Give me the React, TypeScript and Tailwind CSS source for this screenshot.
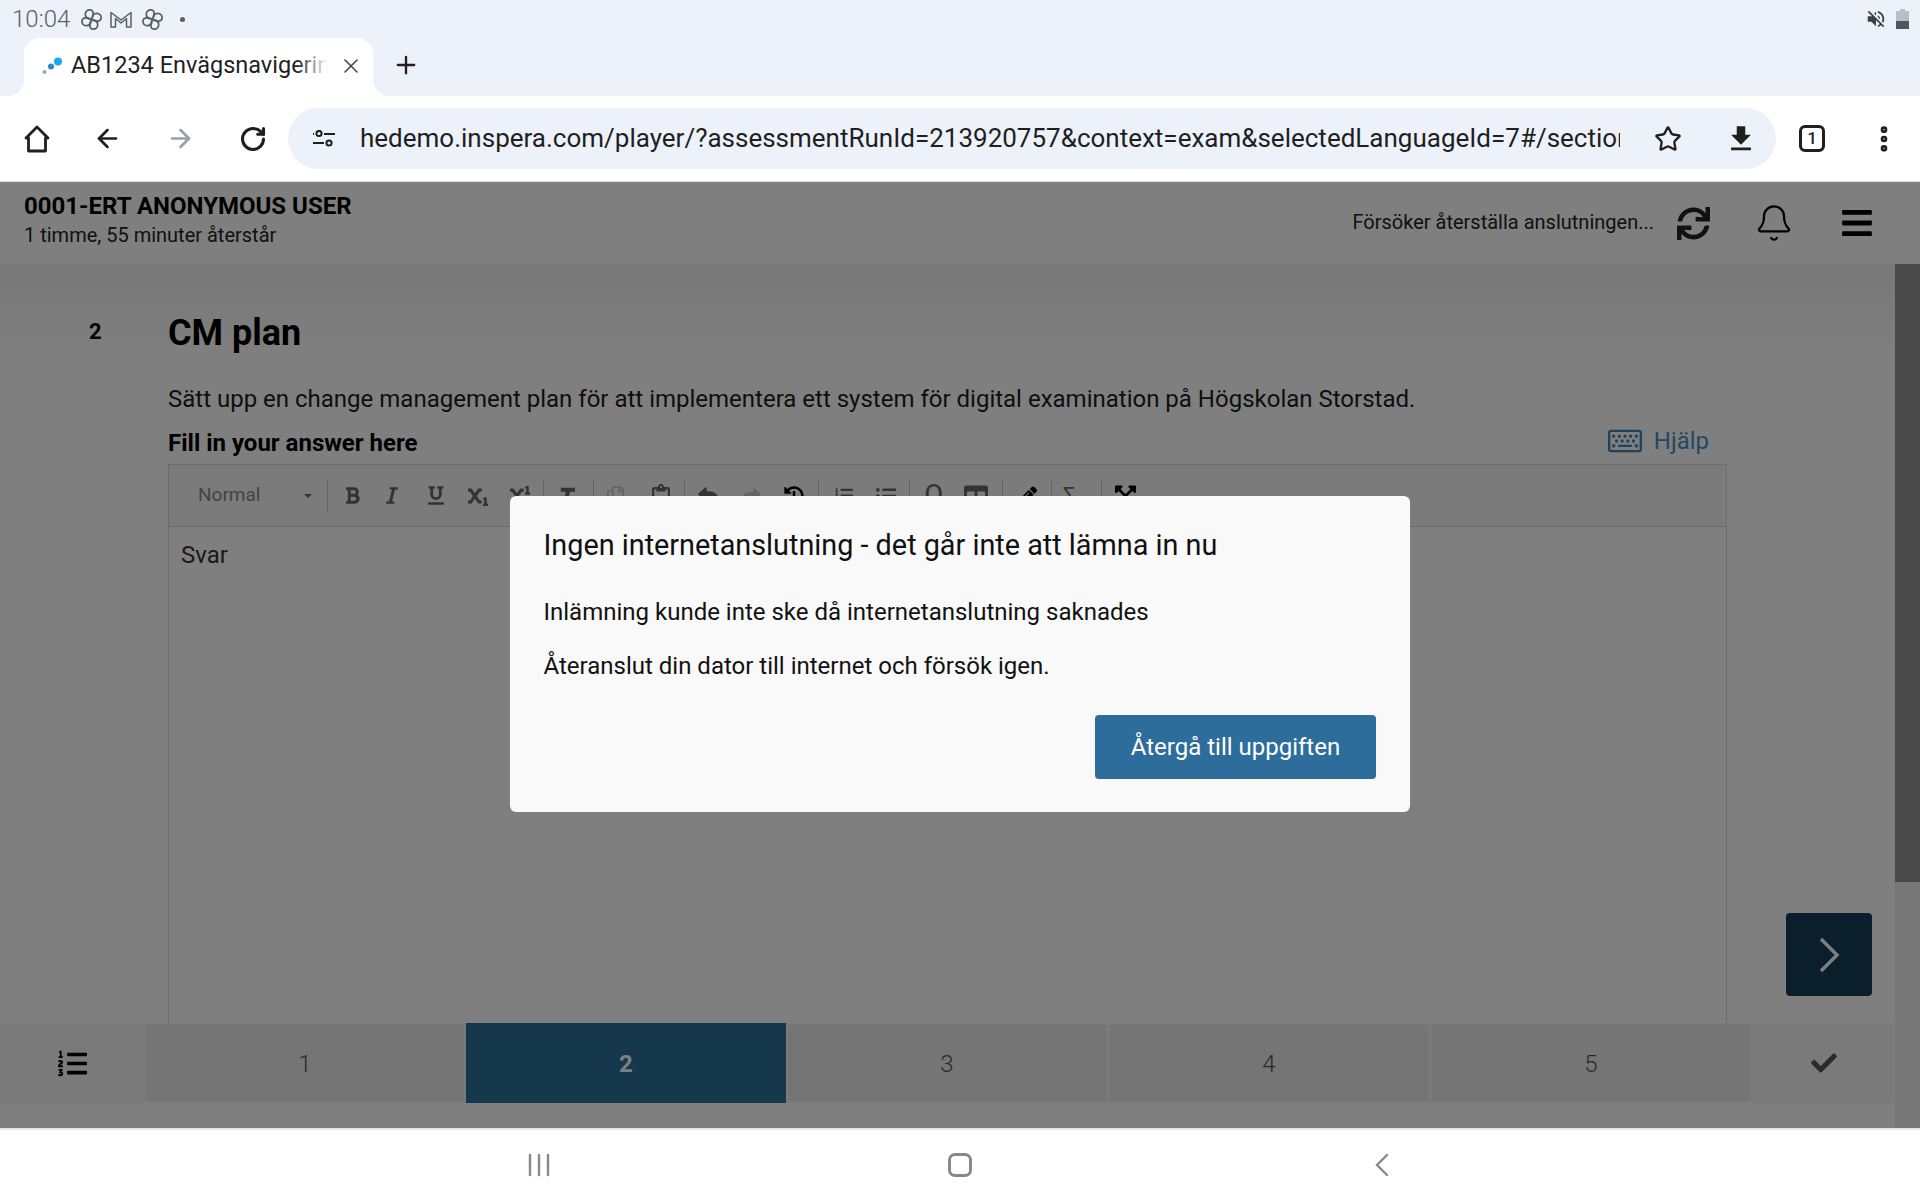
import React from 'react';
import { ArrowLeft, ArrowRight, Bell, EllipsisVertical, Plus, RotateCw, Star, X } from 'lucide-react';
import {
  FaBars, FaBold, FaCheck, FaExpandArrowsAlt, FaHistory, FaItalic, FaListOl, FaListUl, FaPencilAlt, FaRegClipboard, FaRegCopy,
  FaRegKeyboard, FaReply, FaShare, FaSubscript, FaSuperscript, FaSync, FaTable, FaUnderline,
} from 'react-icons/fa';
import { MdFileDownload, MdVolumeOff } from 'react-icons/md';

const Fan: React.FC = () => (
  <svg viewBox="0 0 24 24" className="w-[23px] h-[23px]" fill="none" stroke="#5a5f66" strokeWidth="1.8">
    {[0, 90, 180, 270].map((r) => (
      <path key={r} transform={`rotate(${r} 12 12)`} d="M12 11.5C8 11.5 5.5 9.5 5.5 6.5C5.5 3.5 8 1.8 10.5 2C13 2.2 14 4.2 13.6 6.5L12.6 11" />
    ))}
  </svg>
);

const Sep: React.FC<{ className: string }> = ({ className }) => (
  <div className={`w-px h-[31px] bg-[#c4c4c4] shrink-0 ${className}`} />
);

const EditorToolbar: React.FC = () => (
  <div className="h-[62px] bg-[#f6f6f6] border-b border-[#d0d0d0] flex items-center pl-[29px] text-[#666]">
    <span className="w-[58px] text-[19px] text-[#888] shrink-0">Normal</span>
    <span className="ml-[48px] w-0 h-0 border-x-[4px] border-x-transparent border-t-[4px] border-t-[#666] shrink-0" />
    <Sep className="ml-[15px]" />
    <div className="ml-[17px] w-[15px] flex justify-center shrink-0"><FaBold size={19} /></div>
    <div className="ml-[26px] w-[12px] flex justify-center shrink-0"><FaItalic size={19} /></div>
    <div className="ml-[30px] w-[16px] flex justify-center shrink-0"><FaUnderline size={19} /></div>
    <div className="ml-[24px] w-[20px] flex justify-center shrink-0"><FaSubscript size={20} /></div>
    <div className="ml-[22px] w-[20px] flex justify-center shrink-0"><FaSuperscript size={20} /></div>
    <Sep className="ml-[13px]" />
    <div className="ml-[16px] w-[15px] flex justify-center shrink-0">
      <svg viewBox="0 0 18 22" className="w-[16px] h-[22px]" fill="currentColor"><path d="M1 1H18V6H12L9 21H4L7 6H1Z" /></svg>
    </div>
    <Sep className="ml-[18px]" />
    <div className="ml-[13px] w-[17px] flex justify-center shrink-0 text-[#c8c8c8]"><FaRegCopy size={22} /></div>
    <div className="ml-[28px] w-[18px] flex justify-center shrink-0"><FaRegClipboard size={24} /></div>
    <Sep className="ml-[14px]" />
    <div className="ml-[13px] w-[20px] flex justify-center shrink-0"><FaReply size={20} /></div>
    <div className="ml-[25px] w-[18px] flex justify-center shrink-0 text-[#c8c8c8]"><FaShare size={20} /></div>
    <div className="ml-[23px] w-[20px] flex justify-center shrink-0 text-black"><FaHistory size={24} /></div>
    <Sep className="ml-[14px]" />
    <div className="ml-[16px] w-[18px] flex justify-center shrink-0"><FaListOl size={19} /></div>
    <div className="ml-[23px] w-[20px] flex justify-center shrink-0"><FaListUl size={20} /></div>
    <Sep className="ml-[13px]" />
    <div className="ml-[14px] w-[20px] flex justify-center shrink-0 text-[29px] leading-none">Ω</div>
    <div className="ml-[20px] w-[24px] flex justify-center shrink-0"><FaTable size={24} /></div>
    <Sep className="ml-[14px]" />
    <div className="ml-[15px] w-[19px] flex justify-center shrink-0 text-black"><FaPencilAlt size={22} /></div>
    <Sep className="ml-[14px]" />
    <div className="ml-[11px] w-[12px] flex justify-center shrink-0 text-[22px] leading-none">Σ</div>
    <Sep className="ml-[26px]" />
    <div className="ml-[13px] w-[21px] flex justify-center shrink-0 text-black"><FaExpandArrowsAlt size={24} /></div>
  </div>
);

const BrowserChrome: React.FC = () => (
  <div className="shrink-0">
    <div className="h-[96px] bg-[#edf2fa]">
      <div className="h-[38px] flex items-center pl-[12px] pr-[11px] text-[#5a5f66]">
        <span className="text-[24px] font-light w-[58px]">10:04</span>
        <div className="ml-[10px] flex items-center"><Fan /></div>
        <svg viewBox="0 0 24 18" className="ml-[6px] w-[24px] h-[18px]" fill="none" stroke="#5a5f66" strokeWidth="1.5" strokeLinejoin="round">
          <path d="M2 17V2.5L12 10L22 2.5V17H17.5V8.5L12 13L6.5 8.5V17Z" />
        </svg>
        <div className="ml-[8px] flex items-center"><Fan /></div>
        <span className="ml-[16px] w-[5px] h-[5px] rounded-full bg-[#5a5f66]" />
        <div className="flex-1" />
        <MdVolumeOff size={22} color="#3c4043" />
        <svg viewBox="0 0 13 20" className="ml-[9px] w-[13px] h-[20px]">
          <path d="M4 0H9V2H13V20H0V2H4Z" fill="#b9bdc4" />
          <rect x="0" y="12" width="13" height="8" fill="#50565d" />
        </svg>
      </div>
      <div className="h-[58px] flex items-center">
        <div className="relative ml-[24px] w-[349px] h-[58px] bg-white rounded-t-[16px] flex items-center pb-[3px]">
          <div className="absolute left-[-16px] bottom-0 w-[16px] h-[16px] bg-white">
            <div className="w-full h-full bg-[#edf2fa] rounded-br-[16px]" />
          </div>
          <div className="absolute right-[-16px] bottom-0 w-[16px] h-[16px] bg-white">
            <div className="w-full h-full bg-[#edf2fa] rounded-bl-[16px]" />
          </div>
          <svg viewBox="0 0 20 18" className="ml-[18px] w-[20px] h-[18px] shrink-0">
            <circle cx="2.5" cy="15" r="2" fill="#7fb4d8" />
            <circle cx="9" cy="9.5" r="3" fill="#2f86c4" />
            <circle cx="16" cy="4.5" r="4" fill="#1ea7f0" />
          </svg>
          <div className="ml-[9px] w-[257px] overflow-hidden whitespace-nowrap text-[23.5px] text-[#1f1f1f] relative">
            AB1234 Envägsnavigering
            <div className="absolute right-0 top-0 bottom-0 w-[32px] bg-linear-to-r from-transparent to-white" />
          </div>
          <X className="ml-[11px] shrink-0 text-[#444746]" size={24} strokeWidth={1.6} />
        </div>
        <Plus className="ml-[19px] mb-[4px] text-[#1f1f1f]" size={28} strokeWidth={2} />
      </div>
    </div>
    <div className="h-[85px] bg-white flex items-center text-[#1f1f1f]">
      <svg viewBox="0 0 26 28" className="ml-[24px] w-[26px] h-[28px] shrink-0" fill="none" stroke="#1f1f1f" strokeWidth="2.8" strokeLinejoin="round">
        <path d="M13 2L24 13H21.5V26H4.5V13H2Z" />
      </svg>
      <ArrowLeft className="ml-[43px] shrink-0" size={29} strokeWidth={2.2} />
      <ArrowRight className="ml-[44px] shrink-0 text-[#9aa0a6]" size={29} strokeWidth={2.2} />
      <RotateCw className="ml-[44px] shrink-0" size={28} strokeWidth={2.6} />
      <div className="ml-[21px] w-[1488px] h-[61px] rounded-full bg-[#edf2fa] flex items-center shrink-0">
        <svg viewBox="0 0 22 18" className="ml-[25px] w-[22px] h-[18px] shrink-0" fill="none" stroke="#1f1f1f" strokeWidth="2">
          <circle cx="6" cy="3.5" r="2.6" />
          <path d="M11 4H22M0 13H11" />
          <circle cx="16" cy="13" r="2.6" />
          <path d="M0 4H1" />
        </svg>
        <div className="ml-[25px] w-[1260px] overflow-hidden whitespace-nowrap text-[26px] text-[#1f1f1f] shrink-0">
          hedemo.inspera.com/player/?assessmentRunId=213920757&context=exam&selectedLanguageId=7#/section/1
        </div>
        <Star className="ml-[34px] shrink-0" size={28} strokeWidth={2} />
        <MdFileDownload className="ml-[42px] shrink-0" size={34} />
      </div>
      <div className="ml-[23px] w-[26px] h-[27px] rounded-[6px] border-[3px] border-[#1f1f1f] flex items-center justify-center text-[17px] font-medium shrink-0">1</div>
      <EllipsisVertical className="ml-[43px] shrink-0" size={32} strokeWidth={3} />
    </div>
    <div className="h-px bg-[#e0e0e0]" />
  </div>
);

const NavCell: React.FC<{ label: string }> = ({ label }) => (
  <div className="w-[322px] h-[80px] shrink-0 bg-[#ebebeb] border-2 border-[#f4f4f4] flex items-center justify-center pt-[2px] text-[24px] font-light text-[#555]">
    {label}
  </div>
);

const Page: React.FC = () => (
  <div className="flex-1 min-h-0 flex flex-col bg-white">
    <header className="h-[82px] shrink-0 bg-white flex items-center pl-[24px] text-black">
      <div className="pb-[7px]">
        <div className="text-[24px] leading-[30px] font-bold">0001-ERT ANONYMOUS USER</div>
        <div className="mt-[1px] text-[20px] leading-[26px] text-[#222]">1 timme, 55 minuter återstår</div>
      </div>
      <div className="flex-1" />
      <span className="text-[20px] text-[#222] pb-[2px]">Försöker återställa anslutningen...</span>
      <FaSync className="ml-[23px] text-[#222]" size={33} />
      <Bell className="ml-[44px]" size={40} strokeWidth={1.4} />
      <FaBars className="ml-[46px] mr-[46px]" size={34} />
    </header>
    <div className="flex-1 min-h-0 flex">
      <div className="relative flex-1 min-w-0 flex flex-col">
        <main className="flex-1 min-h-0 flex flex-col pl-[168px] pr-[168px] pt-[48px] bg-linear-to-b from-[#f0f0f0] to-white to-[90px] overflow-hidden">
          <div className="relative">
            <span className="absolute left-[-79px] top-[3px] text-[22px] font-bold">2</span>
            <h1 className="text-[36px] leading-[42px] font-bold text-black">CM plan</h1>
          </div>
          <p className="mt-[29px] text-[24px] leading-[32px] text-[#1c1c1c]">
            Sätt upp en change management plan för att implementera ett system för digital examination på Högskolan Storstad.
          </p>
          <div className="mt-[12px] h-[32px] flex items-center">
            <span className="text-[24px] font-bold text-black">Fill in your answer here</span>
            <div className="flex-1" />
            <div className="flex items-center pr-[18px] pb-[4px]">
              <FaRegKeyboard size={34} color="#3f86b8" />
              <span className="ml-[12px] text-[24px] text-[#4a8fc0]">Hjälp</span>
            </div>
          </div>
          <div className="mt-[5px] flex-1 min-h-0 border-x border-t border-[#d8d8d8] bg-white flex flex-col">
            <EditorToolbar />
            <div className="pl-[12px] pt-[10px] text-[24px] leading-[36px] text-[#333]">Svar</div>
          </div>
        </main>
        <nav className="h-[105px] shrink-0 bg-white">
          <div className="h-[80px] flex bg-[#f4f4f4]">
            <div className="w-[144px] shrink-0 flex items-center justify-center text-black">
              <FaListOl size={29} />
            </div>
            <NavCell label="1" />
            <div className="w-[320px] h-[80px] shrink-0 bg-[#2c7099] flex items-center justify-center pt-[2px] text-[24px] font-bold text-white">2</div>
            <NavCell label="3" />
            <NavCell label="4" />
            <NavCell label="5" />
            <div className="flex-1 flex items-center justify-center text-[#555]">
              <FaCheck size={26} />
            </div>
          </div>
        </nav>
        <button className="absolute left-[1786px] top-[649px] w-[86px] h-[83px] rounded-[4px] bg-[#143c56] flex items-center justify-center">
          <svg viewBox="0 0 22 36" className="w-[22px] h-[36px]" fill="none" stroke="white" strokeWidth="3.4">
            <path d="M3 2L19 18L3 34" />
          </svg>
        </button>
      </div>
      <div className="w-[25px] shrink-0 bg-[#ececec]">
        <div className="h-[618px] bg-[#949494]" />
      </div>
    </div>
  </div>
);

const App: React.FC = () => (
  <div className="w-[1920px] h-[1200px] flex flex-col overflow-hidden font-['Roboto',sans-serif] bg-white">
    <BrowserChrome />
    <div className="relative flex-1 min-h-0 flex flex-col">
      <Page />
      {/* dimmed backdrop and dialog */}
      <div className="absolute inset-0 bg-black/50">
        <div className="absolute left-[510px] top-[314px] w-[900px] h-[316px] rounded-[6px] bg-[#f9f9f9] flex flex-col pl-[33.5px] pr-[34px]">
          <h2 className="mt-[31px] text-[28.8px] leading-[36px] text-[#111]">Ingen internetanslutning - det går inte att lämna in nu</h2>
          <p className="mt-[33px] text-[24px] leading-[32px] text-[#111]">Inlämning kunde inte ske då internetanslutning saknades</p>
          <p className="mt-[22px] text-[24px] leading-[32px] text-[#111]">Återanslut din dator till internet och försök igen.</p>
          <div className="mt-[33px] flex justify-end">
            <button className="w-[281px] h-[64px] rounded-[4px] bg-[#2d6d9c] text-white text-[24px]">Återgå till uppgiften</button>
          </div>
        </div>
      </div>
    </div>
    <div className="h-[72px] shrink-0 bg-white border-t-2 border-[#e8e8e8] flex items-center text-[#888]">
      <svg viewBox="0 0 22 24" className="ml-[528px] w-[22px] h-[24px] shrink-0" fill="none" stroke="#888" strokeWidth="2.4" strokeLinecap="round">
        <path d="M2 2V22M11 2V22M20 2V22" />
      </svg>
      <div className="ml-[398px] w-[24px] h-[24px] rounded-[7px] border-[3px] border-[#888] shrink-0" />
      <svg viewBox="0 0 14 24" className="ml-[403px] w-[14px] h-[24px] shrink-0" fill="none" stroke="#888" strokeWidth="2.4" strokeLinecap="round">
        <path d="M12 2L2 12L12 22" />
      </svg>
    </div>
  </div>
);

export default App;
